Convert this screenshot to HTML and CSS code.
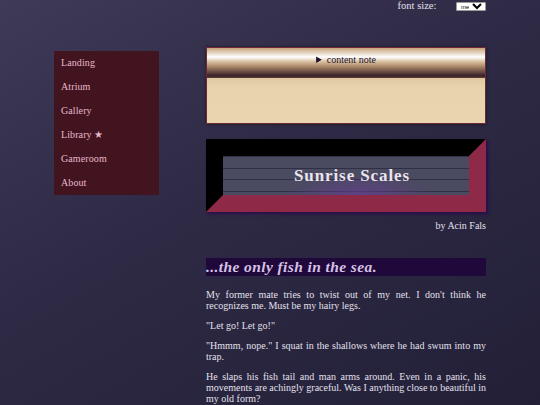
FILE: index.html
```html
<!DOCTYPE html>
<html lang="en">
<head>
  <meta charset="UTF-8" />
  <meta name="viewport" content="width=device-width, initial-scale=1.0" />
  <title>Sunrise Scales | Library</title>
  <link rel="stylesheet" href="styles.css">
</head>

<body>
  <div class="page">
    <div class="font-picker">
      <label for="font-size">font size:</label>
      <select id="font-size">
        <option>small</option>
        <option selected>medium</option>
        <option>large</option>
      </select>
    </div>

    <div class="layout">
      <nav class="side-nav">
        <a href="#">Landing</a>
        <a href="#">Atrium</a>
        <a href="#">Gallery</a>
        <a href="#">Library ★</a>
        <a href="#">Gameroom</a>
        <a href="#">About</a>
      </nav>

      <main class="story">
        <details class="content-note">
          <summary>content note</summary>
          <p>Fishing, nets, mild peril.</p>
        </details>

        <div class="title-frame">
          <h1>Sunrise Scales</h1>
        </div>
        <p class="byline">by Acin Fals</p>

        <h2>...the only fish in the sea.</h2>

        <p>My former mate tries to twist out of my net. I don't think he recognizes me. Must be my hairy legs.</p>
        <p>"Let go! Let go!"</p>
        <p>"Hmmm, nope." I squat in the shallows where he had swum into my trap.</p>
        <p>He slaps his fish tail and man arms around. Even in a panic, his movements are achingly graceful. Was I anything close to beautiful in my old form?</p>
      </main>
    </div>
  </div>
</body>
</html>
```

FILE: styles.css
```css
:root {
  --page-text: #e4e0ec;
  --nav-bg: #42141f;
  --nav-link: #e6b8cc;
  --crimson: #8e2a47;
  --heading-bg: #20083a;
  --heading-text: #d4c2e6;
}

html {
  min-height: 100%;
  background: linear-gradient(150deg, #3e3a57 0%, #2e2a45 45%, #221f37 100%);
}

body {
  margin: 0;
  font-family: 'Liberation Serif', 'Times New Roman', serif;
  color: var(--page-text);
}

.page {
  width: 80%;
  margin: 0 auto;
}

.font-picker {
  text-align: right;
  font-size: 10.5px;
  line-height: 11px;
  height: 12px;
}

.font-picker select {
  font-family: 'Liberation Sans', Arial, sans-serif;
  font-size: 6px;
  height: 9px;
  width: 30px;
  padding: 0;
  margin-left: 17px;
  vertical-align: 0;
  border: 1px solid #999;
  border-radius: 1px;
  background: #fff;
  color: #000;
}

.layout {
  display: flex;
  justify-content: space-between;
  align-items: flex-start;
  margin-top: 35px;
}

.side-nav {
  width: 105px;
  margin-top: 4px;
  background: var(--nav-bg);
  display: flex;
  flex-direction: column;
}

.side-nav a {
  display: block;
  padding-left: 7px;
  line-height: 24px;
  font-size: 10px;
  letter-spacing: 0.1px;
  color: var(--nav-link);
  text-decoration: none;
}

.story {
  width: 280px;
}

/* content warning drawer */
.content-note {
  height: 75px;
  border: 1px solid #6e2b33;
  box-shadow: 0 0 3px rgba(10, 5, 20, 0.6);
  background: linear-gradient(to bottom, #bb956a 0, #d6b990 18px, #e6d2ac 38px, #e9d6b1 100%);
}

.content-note summary {
  height: 30px;
  line-height: 24px;
  text-align: center;
  font-size: 10px;
  color: #1d1028;
  cursor: pointer;
  background: linear-gradient(to bottom,
    #c6a37c 0%,
    #ffffff 30%,
    #d9c2a4 45%,
    #b08d6c 60%,
    #6e5048 78%,
    #3a2229 92%,
    #5a3c36 100%);
}

.content-note summary::marker {
  color: #1d1028;
}

.content-note p {
  margin: 8px;
  color: #2a1a20;
}

/* bevelled title plate */
.title-frame {
  margin-top: 15px;
  border: 17px solid;
  border-color: #000 var(--crimson) var(--crimson) #000;
  box-shadow: 2px 2px 3px #2a0c48;
  background:
    radial-gradient(ellipse 75px 20px at 55% 100%, rgba(104, 62, 148, 0.7), rgba(104, 62, 148, 0)),
    repeating-linear-gradient(to bottom, #2f2f45 0, #2f2f45 1px, #4a4a60 1px, #4a4a60 11.5px),
    #4a4a60;
}

.title-frame h1 {
  margin: 0;
  height: 39px;
  line-height: 40px;
  text-align: center;
  padding-left: 12px;
  font-size: 17px;
  font-weight: bold;
  letter-spacing: 0.9px;
  color: #ece4ee;
}

.byline {
  text-align: right;
  margin: 8px 0 26px;
  line-height: 12px;
  font-size: 10px;
}

.story h2 {
  margin: 0 0 13px;
  height: 18px;
  line-height: 18px;
  background: var(--heading-bg);
  color: var(--heading-text);
  font-size: 15.5px;
  font-style: italic;
  font-weight: bold;
  letter-spacing: 0.4px;
}

.story > p:not(.byline) {
  margin: 0 0 9px;
  font-size: 10px;
  line-height: 11px;
  text-align: justify;
}
```
